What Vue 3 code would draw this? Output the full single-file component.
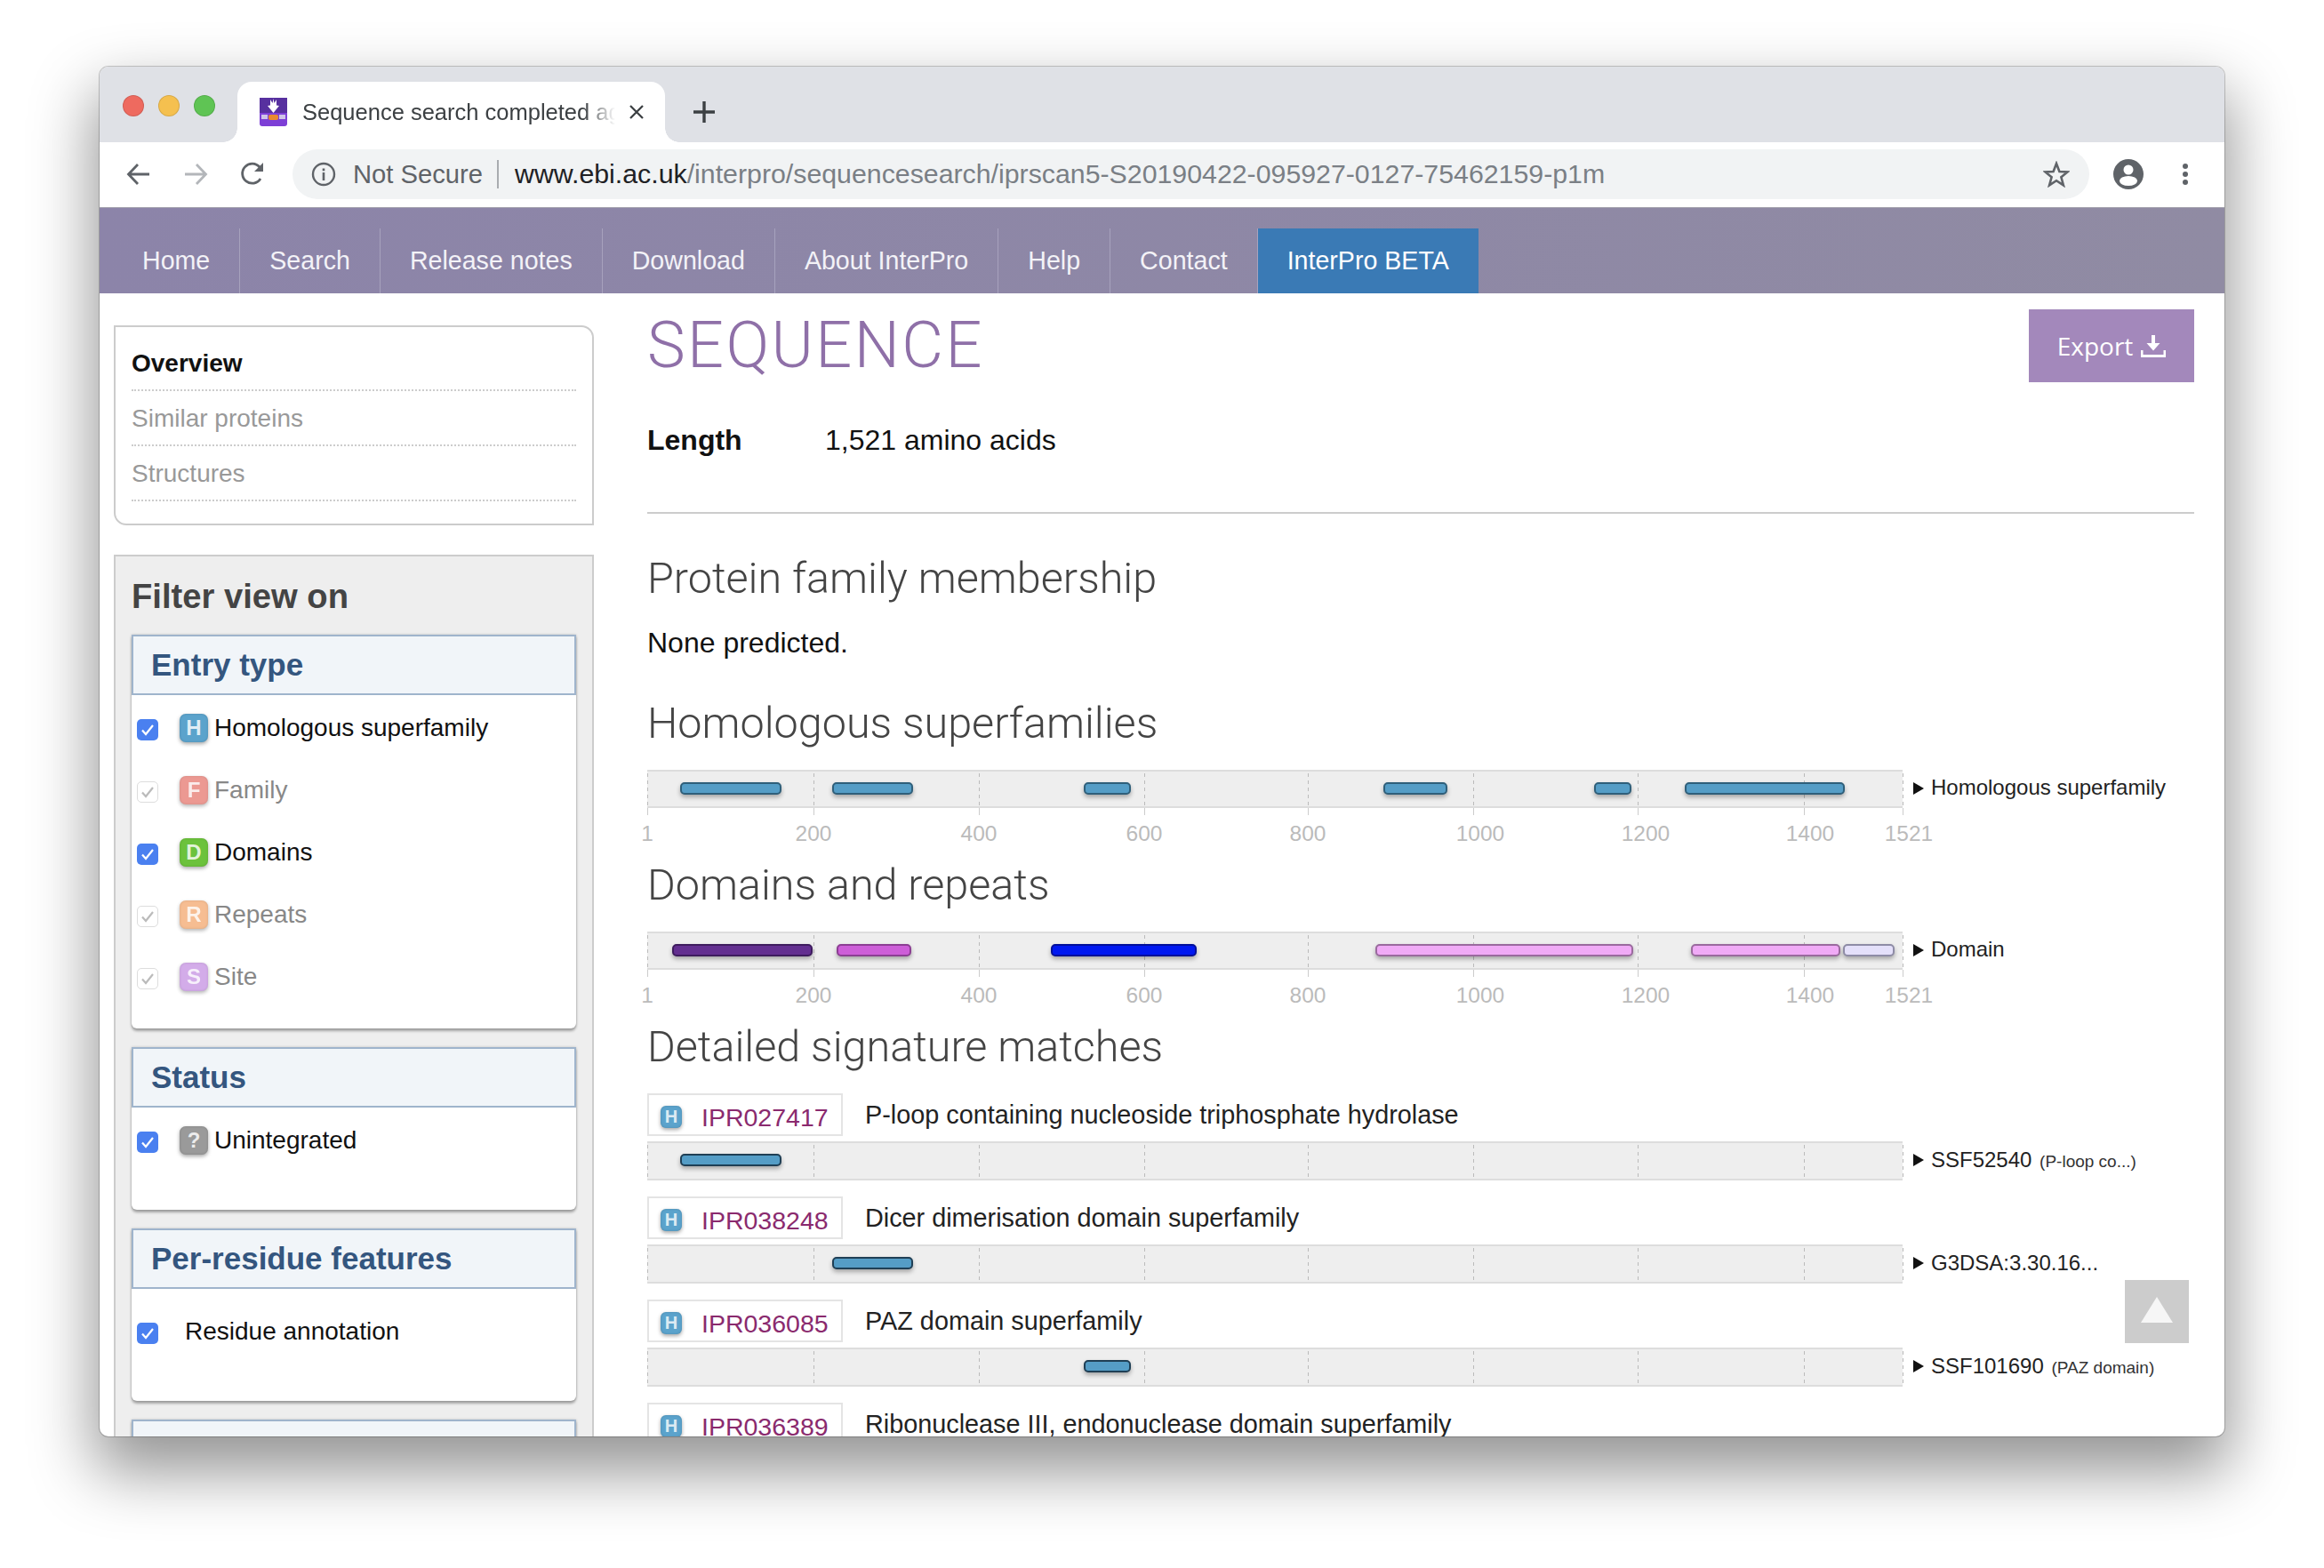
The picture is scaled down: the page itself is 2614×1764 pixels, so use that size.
<script setup>
const navItems = ['Home', 'Search', 'Release notes', 'Download', 'About InterPro', 'Help', 'Contact']

const ticks = [0, 187, 373, 559, 743, 929, 1114, 1301, 1412]
const axis = [
  { t: '1', x: 0 }, { t: '200', x: 187 }, { t: '400', x: 373 }, { t: '600', x: 559 }, { t: '800', x: 743 },
  { t: '1000', x: 937 }, { t: '1200', x: 1123 }, { t: '1400', x: 1308 }, { t: '1521', x: 1419 }
]

const blue = { fill: '#559dc6', line: '#2f5f7a' }
const blueDark = { fill: '#559dc6', line: '#1f3f55' }

// x is measured from the left edge of the track
const summaries = [
  {
    title: 'Homologous superfamilies',
    label: 'Homologous superfamily',
    bars: [
      { x: 37, w: 114, ...blue }, { x: 208, w: 91, ...blue }, { x: 491, w: 53, ...blue },
      { x: 828, w: 72, ...blue }, { x: 1065, w: 42, ...blue }, { x: 1167, w: 180, ...blue }
    ]
  },
  {
    title: 'Domains and repeats',
    label: 'Domain',
    bars: [
      { x: 28, w: 158, fill: '#632f90', line: '#3e1c5e' },
      { x: 213, w: 84, fill: '#cd5ed8', line: '#8c3e93' },
      { x: 454, w: 164, fill: '#0018f0', line: '#000f9a' },
      { x: 819, w: 290, fill: '#f0aaf6', line: '#9a6a9e' },
      { x: 1174, w: 168, fill: '#f0aaf6', line: '#9a6a9e' },
      { x: 1345, w: 58, fill: '#e4e0fa', line: '#8e8ca6' }
    ]
  }
]

const signatures = [
  { ipr: 'IPR027417', name: 'P-loop containing nucleoside triphosphate hydrolase', label: 'SSF52540', small: '(P-loop co...)', bars: [{ x: 37, w: 114, ...blueDark }] },
  { ipr: 'IPR038248', name: 'Dicer dimerisation domain superfamily', label: 'G3DSA:3.30.16...', small: '', bars: [{ x: 208, w: 91, ...blueDark }] },
  { ipr: 'IPR036085', name: 'PAZ domain superfamily', label: 'SSF101690', small: '(PAZ domain)', bars: [{ x: 491, w: 53, ...blueDark }] },
  { ipr: 'IPR036389', name: 'Ribonuclease III, endonuclease domain superfamily', label: '', small: '', bars: [] }
]

const entryTypes = [
  { name: 'Homologous superfamily', letter: 'H', color: '#5ba3cc', on: true },
  { name: 'Family', letter: 'F', color: '#e98880', on: false },
  { name: 'Domains', letter: 'D', color: '#6cc23c', on: true },
  { name: 'Repeats', letter: 'R', color: '#f5b27f', on: false },
  { name: 'Site', letter: 'S', color: '#cc9ee6', on: false }
]

function barStyle(b) {
  return { left: b.x + 'px', width: b.w + 'px', background: b.fill, borderColor: b.line }
}
</script>

<template>
  <div class="page">
    <div class="window">
      <div class="tabstrip">
        <span class="light red"></span>
        <span class="light yellow"></span>
        <span class="light green"></span>
        <div class="tab">
          <svg class="favicon" width="31" height="32" viewBox="0 0 31 32">
            <rect width="31" height="32" rx="3" fill="#7d3fd6" />
            <rect y="0" width="31" height="17" fill="#57309f" />
            <path d="M15.5 17 L9 9 L12 8.5 L12 2 L14.5 6 L15.5 1 L16.5 6 L19 2 L19 8.5 L22 9 Z" fill="#fff" />
            <rect x="2" y="19" width="7" height="5" fill="#cfc4e8" />
            <rect x="22" y="19" width="7" height="5" fill="#cfc4e8" />
            <rect x="10" y="19" width="11" height="6" rx="2" fill="#e98a2f" />
          </svg>
          <span class="tab-title">Sequence search completed ag</span>
          <svg class="tab-close" width="18" height="16" viewBox="0 0 18 16">
            <path d="M2 1 L16 15 M16 1 L2 15" stroke="#3c4043" stroke-width="2.3" fill="none" />
          </svg>
        </div>
        <svg class="plus" width="24" height="24" viewBox="0 0 24 24">
          <path d="M12 0 V24 M0 12 H24" stroke="#3c4043" stroke-width="3.4" fill="none" />
        </svg>
      </div>

      <div class="toolbar">
        <svg class="tb-back" width="28" height="26" viewBox="0 0 28 26">
          <path d="M26 13 H3 M13 2 L2.5 13 L13 24" stroke="#5f6368" stroke-width="2.8" fill="none" />
        </svg>
        <svg class="tb-fwd" width="28" height="26" viewBox="0 0 28 26">
          <path d="M2 13 H25 M15 2 L25.5 13 L15 24" stroke="#b3b6ba" stroke-width="2.8" fill="none" />
        </svg>
        <svg class="tb-reload" width="28" height="28" viewBox="0 0 28 28">
          <path d="M23 19 A11 11 0 1 1 22 6" stroke="#5f6368" stroke-width="2.8" fill="none" />
          <path d="M26 1 V11 H16 Z" fill="#5f6368" />
        </svg>
        <div class="omnibox">
          <svg class="info" width="28" height="28" viewBox="0 0 28 28">
            <circle cx="14" cy="14" r="12" stroke="#5f6368" stroke-width="2.4" fill="none" />
            <rect x="12.7" y="12" width="2.6" height="9" fill="#5f6368" />
            <rect x="12.7" y="7.5" width="2.6" height="2.8" fill="#5f6368" />
          </svg>
          <span class="not-secure">Not Secure</span>
          <span class="omni-sep"></span>
          <span class="url"><span class="url-host">www.ebi.ac.uk</span>/interpro/sequencesearch/iprscan5-S20190422-095927-0127-75462159-p1m</span>
          <svg class="star" width="30" height="30" viewBox="0 0 30 30">
            <path d="M15 3 L18.4 12 L27.6 12.4 L20.4 18.3 L22.9 27.4 L15 22.2 L7.1 27.4 L9.6 18.3 L2.4 12.4 L11.6 12 Z" stroke="#5f6368" stroke-width="2.6" fill="none" />
          </svg>
        </div>
        <svg class="profile" width="34" height="34" viewBox="0 0 34 34">
          <circle cx="17" cy="17" r="17" fill="#5f6368" />
          <circle cx="17" cy="12" r="5.5" fill="#fff" />
          <ellipse cx="17" cy="24.5" rx="10" ry="5.5" fill="#fff" />
        </svg>
        <svg class="dots" width="8" height="26" viewBox="0 0 8 26">
          <circle cx="4" cy="4" r="3" fill="#5f6368" />
          <circle cx="4" cy="13" r="3" fill="#5f6368" />
          <circle cx="4" cy="22" r="3" fill="#5f6368" />
        </svg>
      </div>

      <nav class="sitenav">
        <a v-for="item in navItems" :key="item" class="navlink">{{ item }}</a>
        <a class="navlink active">InterPro BETA</a>
      </nav>

      <div class="content">
        <aside class="sidebar">
          <div class="menu-card">
            <div class="menu-row current">Overview</div>
            <div class="menu-row">Similar proteins</div>
            <div class="menu-row">Structures</div>
          </div>

          <div class="filters">
            <div class="filters-title">Filter view on</div>

            <section class="fbox">
              <h3 class="fbox-head">Entry type</h3>
              <div class="fbox-body">
                <div v-for="t in entryTypes" :key="t.letter" class="frow" :class="{ off: !t.on }">
                  <span class="check">
                    <svg width="16" height="14" viewBox="0 0 16 14"><path d="M2 7.5 L6 12 L14 2" stroke-width="2.2" fill="none" /></svg>
                  </span>
                  <span class="badge" :style="{ background: t.color }">{{ t.letter }}</span>
                  <span class="flabel">{{ t.name }}</span>
                </div>
              </div>
            </section>

            <section class="fbox">
              <h3 class="fbox-head">Status</h3>
              <div class="fbox-body tall">
                <div class="frow">
                  <span class="check">
                    <svg width="16" height="14" viewBox="0 0 16 14"><path d="M2 7.5 L6 12 L14 2" stroke-width="2.2" fill="none" /></svg>
                  </span>
                  <span class="badge unint">?</span>
                  <span class="flabel">Unintegrated</span>
                </div>
              </div>
            </section>

            <section class="fbox">
              <h3 class="fbox-head">Per-residue features</h3>
              <div class="fbox-body tall residue">
                <div class="frow plain">
                  <span class="check">
                    <svg width="16" height="14" viewBox="0 0 16 14"><path d="M2 7.5 L6 12 L14 2" stroke-width="2.2" fill="none" /></svg>
                  </span>
                  <span class="flabel">Residue annotation</span>
                </div>
              </div>
            </section>

            <section class="fbox">
              <h3 class="fbox-head">Colour by</h3>
            </section>
          </div>
        </aside>

        <main class="main">
          <div class="title-row">
            <h1 class="page-title">SEQUENCE</h1>
            <button class="export">
              Export
              <svg width="28" height="25" viewBox="0 0 28 25">
                <path d="M12 0 H16 V9 H21.5 L14 17.5 L6.5 9 H12 Z" fill="#fff" />
                <path d="M0 17 H2.5 V22 H25.5 V17 H28 V25 H0 Z" fill="#fff" />
              </svg>
            </button>
          </div>

          <div class="length-row">
            <strong class="length-key">Length</strong>
            <span>1,521 amino acids</span>
          </div>
          <hr class="rule" />

          <h2 class="heading first">Protein family membership</h2>
          <p class="none">None predicted.</p>

          <template v-for="(s, i) in summaries" :key="s.title">
            <h2 class="heading" :class="{ spaced: i === 0 }">{{ s.title }}</h2>
            <div class="track-row">
              <div class="track">
                <span v-for="t in ticks" :key="t" class="tick" :style="{ left: t + 'px' }"></span>
                <span v-for="b in s.bars" :key="b.x" class="bar" :style="barStyle(b)"></span>
              </div>
              <span class="arrow"></span>
              <span class="track-label">{{ s.label }}</span>
            </div>
            <div class="axis">
              <span v-for="t in ticks" :key="t" class="axis-tick" :style="{ left: t + 'px' }"></span>
              <span v-for="a in axis" :key="a.t" class="axis-num" :style="{ left: a.x + 'px' }">{{ a.t }}</span>
            </div>
          </template>

          <h2 class="heading">Detailed signature matches</h2>
          <div class="signatures">
            <div v-for="sig in signatures" :key="sig.ipr" class="signature">
              <div class="sig-head">
                <div class="ipr-box">
                  <span class="mini-badge">H</span>
                  <a class="ipr">{{ sig.ipr }}</a>
                </div>
                <span class="sig-name">{{ sig.name }}</span>
              </div>
              <div class="track-row">
                <div class="track">
                  <span v-for="t in ticks" :key="t" class="tick" :style="{ left: t + 'px' }"></span>
                  <span v-for="b in sig.bars" :key="b.x" class="bar" :style="barStyle(b)"></span>
                </div>
                <span class="arrow"></span>
                <span class="track-label">{{ sig.label }} <small class="track-small">{{ sig.small }}</small></span>
              </div>
            </div>
          </div>
        </main>
      </div>

      <div class="to-top"><span class="to-top-arrow"></span></div>
    </div>
  </div>
</template>

<style>
html, body { margin: 0; background: #fff; }
</style>

<style scoped>
.page {
  width: 2614px;
  height: 1764px;
  box-sizing: border-box;
  padding: 75px 112px 148px;
  background: #fff;
  font-family: "Liberation Sans", Arial, sans-serif;
  overflow: hidden;
}
.window {
  position: relative;
  height: 100%;
  display: flex;
  flex-direction: column;
  background: #fff;
  border-radius: 10px;
  overflow: hidden;
  box-shadow: 0 0 0 1px rgba(0, 0, 0, 0.2), 0 34px 70px 6px rgba(0, 0, 0, 0.42);
}

/* browser chrome */
.tabstrip {
  height: 85px;
  flex: none;
  display: flex;
  align-items: flex-start;
  background: #dfe1e6;
}
.light {
  width: 24px;
  height: 24px;
  box-sizing: border-box;
  border-radius: 50%;
  margin-top: 32px;
  margin-right: 16px;
  border: 1px solid rgba(0, 0, 0, 0.12);
}
.light.red { background: #ee6a5f; margin-left: 26px; }
.light.yellow { background: #f5c04f; }
.light.green { background: #5fc454; margin-right: 25px; }
.tab {
  position: relative;
  width: 481px;
  height: 68px;
  margin-top: 17px;
  box-sizing: border-box;
  padding: 0 0 0 25px;
  display: flex;
  align-items: center;
  background: #fff;
  border-radius: 16px 16px 0 0;
}
.tab::before,
.tab::after {
  content: "";
  position: absolute;
  bottom: 0;
  width: 16px;
  height: 16px;
}
.tab::before { left: -16px; background: radial-gradient(circle at 0 0, #dfe1e6 15.5px, #fff 16px); }
.tab::after { right: -16px; background: radial-gradient(circle at 100% 0, #dfe1e6 15.5px, #fff 16px); }
.favicon { flex: none; margin-top: -1px; }
.tab-title {
  width: 352px;
  margin-left: 17px;
  font-size: 25.5px;
  color: #3c4043;
  white-space: nowrap;
  overflow: hidden;
  -webkit-mask-image: linear-gradient(to right, #000 90%, transparent 100%);
  mask-image: linear-gradient(to right, #000 90%, transparent 100%);
}
.tab-close { flex: none; margin-left: 15px; }
.plus { margin: 39px 0 0 32px; }

.toolbar {
  height: 73px;
  flex: none;
  display: flex;
  align-items: center;
  box-sizing: border-box;
  padding-bottom: 1px;
  background: #fff;
  position: relative;
}
.tb-back { margin-left: 30px; }
.tb-fwd { margin-left: 36px; }
.tb-reload { margin-left: 36px; }
.omnibox {
  width: 2021px;
  height: 56px;
  margin-left: 31px;
  box-sizing: border-box;
  padding: 0 22px 0 21px;
  display: flex;
  align-items: center;
  background: #f1f3f4;
  border-radius: 28px;
}
.not-secure { margin-left: 19px; font-size: 29.2px; color: #5f6368; white-space: nowrap; }
.omni-sep { width: 2px; height: 32px; margin: 0 18px 0 16px; background: #a9acb0; flex: none; }
.url { flex: 1; font-size: 30.3px; color: #7a7f85; white-space: nowrap; }
.url-host { color: #202124; }
.star { flex: none; }
.profile { margin-left: 27px; flex: none; }
.dots { margin-left: 43px; flex: none; }

.sitenav {
  height: 97px;
  flex: none;
  box-sizing: border-box;
  padding: 23px 0 0 15px;
  display: flex;
  align-items: stretch;
  background: linear-gradient(to right, #8c84a9, #908ba3);
  border-top: 1px solid #a3a1ad;
}
.navlink {
  display: flex;
  align-items: center;
  padding: 0 33px 1px;
  font-size: 28.6px;
  color: #f3f2f7;
  border-right: 1px solid #a7a2bd;
  white-space: nowrap;
}
.navlink:last-child { border-right: none; }
.navlink.active { background: #3a7ab5; color: #fff; }

/* page body */
.content {
  flex: 1;
  min-height: 0;
  display: flex;
  overflow: hidden;
}
.sidebar {
  width: 540px;
  flex: none;
  margin: 36px 0 0 16px;
}
.menu-card {
  height: 225px;
  box-sizing: border-box;
  padding: 10px 18px 0;
  border: 2px solid #ccc;
  border-radius: 0 14px 0 14px;
}
.menu-row {
  height: 62px;
  box-sizing: border-box;
  padding-top: 2px;
  display: flex;
  align-items: center;
  font-size: 28px;
  color: #999;
  border-bottom: 2px dotted #ccc;
}
.menu-row.current { color: #111; font-weight: 700; }

.filters {
  margin-top: 33px;
  box-sizing: border-box;
  height: 1100px;
  padding: 21px 18px 0;
  background: #eee;
  border: 2px solid #ccc;
}
.filters-title {
  height: 47px;
  line-height: 47px;
  font-size: 38.2px;
  font-weight: 700;
  color: #444;
}
.fbox {
  margin-top: 21px;
  background: #fff;
  border-radius: 0 0 6px 6px;
  box-shadow: 0 3px 3px rgba(0, 0, 0, 0.3), 0 0 3px rgba(0, 0, 0, 0.2);
}
.filters-title + .fbox { margin-top: 20px; }
.fbox-head {
  height: 68px;
  margin: 0;
  box-sizing: border-box;
  padding-left: 20px;
  display: flex;
  align-items: center;
  font-size: 35px;
  font-weight: 700;
  color: #34567f;
  background: #f1f5f9;
  border: 2px solid #9fb4cc;
}
.fbox-body { padding: 2px 0 23px; }
.fbox-body.tall { padding-bottom: 43px; }
.fbox-body.residue { padding-top: 13px; }
.frow {
  height: 70px;
  box-sizing: border-box;
  padding-left: 6px;
  display: flex;
  align-items: center;
  font-size: 28px;
  color: #111;
}
.frow.off { color: #888; }
.frow.off .badge { opacity: 0.85; }
.frow.plain .flabel { margin-left: 30px; }
.check {
  width: 24px;
  height: 24px;
  flex: none;
  margin-top: 3px;
  display: flex;
  align-items: center;
  justify-content: center;
  background: #4a80f0;
  border-radius: 5px;
}
.check svg { stroke: #fff; }
.frow.off .check { background: #fff; box-sizing: border-box; border: 1px solid #ddd; }
.frow.off .check svg { stroke: #bbb; }
.badge {
  width: 32px;
  height: 32px;
  flex: none;
  margin-left: 24px;
  display: flex;
  align-items: center;
  justify-content: center;
  font-size: 24px;
  font-weight: 700;
  color: rgba(255, 255, 255, 0.82);
  border-radius: 7px;
  box-shadow: 0 2px 4px rgba(0, 0, 0, 0.35), inset 0 0 3px rgba(0, 0, 0, 0.15);
}
.badge.unint { background: #9a9a9a; }
.flabel { margin-left: 7px; white-space: nowrap; }

.main {
  flex: 1;
  min-width: 0;
  margin: 0 34px 0 60px;
  padding-top: 18px;
  font-size: 32px;
  color: #111;
}
.title-row {
  display: flex;
  justify-content: space-between;
  height: 82px;
}
.page-title {
  margin: 0;
  font-family: Roboto, "Liberation Sans", sans-serif;
  font-size: 72px;
  font-weight: 300;
  letter-spacing: 2.4px;
  line-height: 82px;
  color: #8f70a8;
}
.export {
  width: 186px;
  height: 82px;
  display: flex;
  align-items: center;
  justify-content: center;
  gap: 9px;
  padding: 0;
  border: none;
  background: #a388bb;
  color: #fff;
  font-family: "Open Sans", sans-serif;
  font-size: 28px;
  font-weight: 400;
}
.length-row {
  margin-top: 44px;
  display: flex;
  line-height: 42px;
}
.length-key { width: 200px; font-weight: 700; }
.rule {
  margin: 60px 0 0;
  height: 2px;
  border: none;
  background: #ccc;
}
.heading {
  margin: 0;
  height: 59px;
  padding-top: 1px;
  line-height: 60px;
  font-family: Roboto, "Liberation Sans", sans-serif;
  font-size: 48.5px;
  font-weight: 300;
  color: #444;
}
.heading.first { margin-top: 42px; }
.heading.spaced { margin-top: 40px; }
.none { margin: 23px 0 0; line-height: 40px; }

.track-row {
  margin-top: 23px;
  display: flex;
  align-items: center;
}
.track {
  position: relative;
  width: 1412px;
  height: 43px;
  flex: none;
  box-sizing: border-box;
  background: #eee;
  border-top: 2px solid #ddd;
  border-bottom: 2px solid #ddd;
}
.tick {
  position: absolute;
  top: 2px;
  bottom: 0;
  width: 1px;
  background: repeating-linear-gradient(to bottom, #bbb 0, #bbb 4px, transparent 4px, transparent 8px);
}
.bar {
  position: absolute;
  top: 12px;
  height: 14px;
  box-sizing: border-box;
  border: 2px solid;
  border-radius: 5px;
  box-shadow: 0 3px 5px rgba(0, 0, 0, 0.3);
}
.arrow {
  width: 0;
  height: 0;
  flex: none;
  margin: 0 0 2px 12px;
  border-left: 12px solid #111;
  border-top: 7px solid transparent;
  border-bottom: 7px solid transparent;
}
.track-label {
  margin: 0 0 3px 8px;
  font-size: 24px;
  color: #222;
  white-space: nowrap;
}
.track-small { font-size: 19px; color: #333; margin-left: 2px; }
.axis {
  position: relative;
  width: 1412px;
  height: 56px;
}
.axis-tick {
  position: absolute;
  top: 0;
  height: 8px;
  border-left: 1px solid #ccc;
}
.axis-num {
  position: absolute;
  top: 15px;
  line-height: 28px;
  font-size: 24.5px;
  color: #bbb;
  transform: translateX(-50%);
}

.signatures { margin-top: 23px; }
.signature { margin-bottom: 18px; }
.signature .track-row { margin-top: 6px; }
.signature .track { height: 44px; }
.signature .bar { top: 12px; }
.sig-head {
  display: flex;
  align-items: center;
  height: 48px;
}
.ipr-box {
  width: 220px;
  height: 48px;
  flex: none;
  box-sizing: border-box;
  padding-left: 13px;
  display: flex;
  align-items: center;
  border: 2px solid #e4e4e4;
}
.mini-badge {
  width: 24px;
  height: 25px;
  flex: none;
  margin-top: 5px;
  display: flex;
  align-items: center;
  justify-content: center;
  font-size: 20px;
  font-weight: 700;
  color: rgba(255, 255, 255, 0.8);
  background: #5ba3cc;
  border-radius: 6px;
  box-shadow: 0 2px 4px rgba(0, 0, 0, 0.35), inset 0 0 3px rgba(0, 0, 0, 0.15);
}
.ipr {
  margin: 6px 0 0 22px;
  font-size: 28.5px;
  color: #8a2a6e;
}
.sig-name {
  margin-left: 25px;
  font-size: 28.8px;
  color: #222;
  white-space: nowrap;
}

.to-top {
  position: absolute;
  right: 40px;
  top: 1365px;
  width: 72px;
  height: 71px;
  display: flex;
  justify-content: center;
  padding-top: 19px;
  box-sizing: border-box;
  background: #ccc;
}
.to-top-arrow {
  width: 0;
  height: 0;
  border-left: 18px solid transparent;
  border-right: 18px solid transparent;
  border-bottom: 29px solid #f6f6f6;
}
</style>
